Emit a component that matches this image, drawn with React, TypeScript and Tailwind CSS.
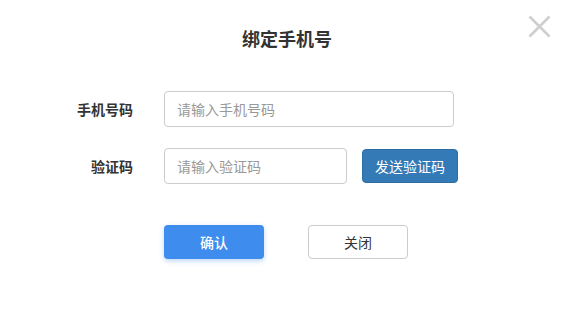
import React from "react";

export default function App() {
  return (
    <div
      className="relative w-[574px] h-[324px] bg-white overflow-hidden"
      style={{ fontFamily: '"Noto Sans CJK SC", "Noto Sans", sans-serif' }}
    >
      {/* close icon */}
      <button className="absolute left-[528px] top-[15px] w-[23px] h-[23px]" aria-label="close">
        <svg width="23" height="23" viewBox="0 0 23 23">
          <path d="M1.5 1.5 L21.5 21.5 M21.5 1.5 L1.5 21.5" stroke="#cfcfcf" strokeWidth="2.6" fill="none" />
        </svg>
      </button>

      <h2 className="pt-[26px] text-center text-[18px] leading-[24px] font-bold text-[#333]">绑定手机号</h2>

      <div className="mt-[41px] flex flex-col">
        <div className="flex items-center">
          <label className="w-[133px] text-right text-[14px] font-bold text-[#333]">手机号码</label>
          <input
            className="ml-[31px] w-[290px] h-[36px] rounded-[4px] border border-[#cccccc] px-3 text-[14px] text-[#333] placeholder:text-[#999] outline-none"
            placeholder="请输入手机号码"
          />
        </div>

        <div className="mt-[21px] flex items-center">
          <label className="w-[133px] text-right text-[14px] font-bold text-[#333]">验证码</label>
          <input
            className="ml-[31px] w-[183px] h-[36px] rounded-[4px] border border-[#cccccc] px-3 text-[14px] text-[#333] placeholder:text-[#999] outline-none"
            placeholder="请输入验证码"
          />
          <button className="ml-[15px] w-[96px] h-[34px] rounded-[4px] border border-[#2e6da4] bg-[#337ab7] text-[14px] text-white">
            发送验证码
          </button>
        </div>

        <div className="mt-[41px] flex items-center pl-[164px] gap-[44px]">
          <button className="w-[100px] h-[34px] rounded-[4px] bg-[#3d8cee] text-[14px] font-medium text-white shadow-[0_2px_5px_rgba(61,140,238,0.35)]">
            确认
          </button>
          <button className="w-[100px] h-[34px] rounded-[4px] border border-[#cccccc] bg-white text-[14px] text-[#333]">
            关闭
          </button>
        </div>
      </div>
    </div>
  );
}
